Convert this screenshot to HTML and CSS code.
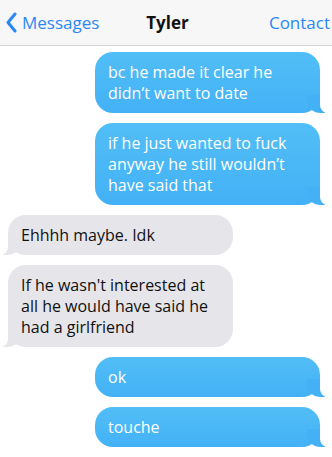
FILE: index.html
```html
<!DOCTYPE html>
<html>
<head>
<meta charset="utf-8">
<link rel="stylesheet" href="styles.css">
</head>
<body>
<div class="phone">
  <header class="nav">
    <div class="back">
      <svg class="chev" width="12" height="21" viewBox="0 0 12 21"><path d="M10 2 L3 10.5 L10 19" fill="none" stroke="#2b87f7" stroke-width="3" stroke-linecap="round" stroke-linejoin="round"/></svg>
      <span>Messages</span>
    </div>
    <div class="title">Tyler</div>
    <div class="contact">Contact</div>
  </header>
  <main class="thread">
    <div class="msg out">bc he made it clear he didn’t want to date</div>
    <div class="msg out">if he just wanted to fuck anyway he still wouldn’t have said that</div>
    <div class="msg in">Ehhhh maybe. Idk</div>
    <div class="msg in">If he wasn't interested at all he would have said he had a girlfriend</div>
    <div class="msg out">ok</div>
    <div class="msg out">touche</div>
  </main>
</div>
</body>
</html>
```
FILE: styles.css
```css
html, body {
  margin: 0;
  padding: 0;
  background: #ffffff;
}
body {
  font-family: "Open Sans", "Noto Sans", sans-serif;
}
.phone {
  width: 332px;
  height: 457px;
  overflow: hidden;
}
.nav {
  height: 45px;
  background: #f7f7f7;
  border-bottom: 1px solid #d4d4d4;
  display: flex;
  align-items: center;
  justify-content: space-between;
  font-size: 17px;
  padding: 0 2px 0 5px;
  box-sizing: content-box;
}
.back {
  display: flex;
  align-items: center;
  gap: 5px;
  color: #2b87f7;
  width: 110px;
}
.chev {
  display: block;
}
.title {
  font-weight: 700;
  color: #111;
}
.contact {
  color: #2b87f7;
  width: 110px;
  text-align: right;
}
.thread {
  display: flex;
  flex-direction: column;
  gap: 10px;
  padding-top: 6px;
}
.msg {
  position: relative;
  width: 225px;
  box-sizing: border-box;
  padding: 10px 13px 9px;
  font-size: 16px;
  line-height: 21px;
  border-radius: 18px;
}
.out {
  align-self: flex-end;
  margin-right: 12px;
  color: #fff;
  background: linear-gradient(#52bef7, #43b1f5);
}
.in {
  align-self: flex-start;
  margin-left: 8px;
  color: #111;
  background: #e5e5ea;
}
.out::before, .out::after, .in::before, .in::after {
  content: "";
  position: absolute;
  bottom: 0;
  height: 18px;
}
.out::before {
  right: -5px;
  width: 18px;
  background: #43b1f5;
  border-bottom-left-radius: 14px 12px;
}
.out::after {
  right: -20px;
  width: 20px;
  background: #fff;
  border-bottom-left-radius: 8px;
}
.in::before {
  left: -5px;
  width: 18px;
  background: #e5e5ea;
  border-bottom-right-radius: 14px 12px;
}
.in::after {
  left: -20px;
  width: 20px;
  background: #fff;
  border-bottom-right-radius: 8px;
}
```
